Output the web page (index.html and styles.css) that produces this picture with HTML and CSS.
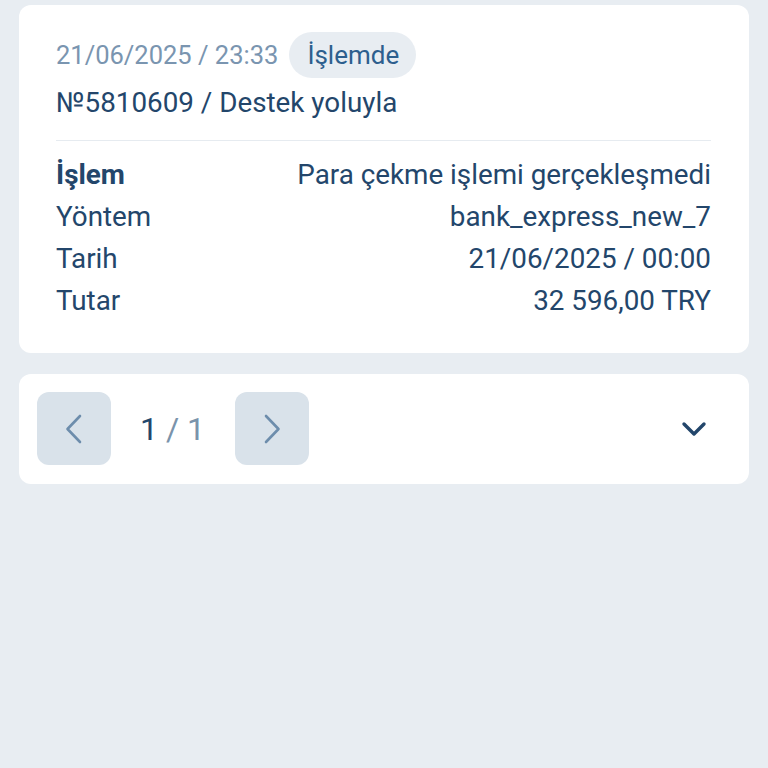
FILE: index.html
```html
<!DOCTYPE html>
<html lang="tr">
<head>
  <meta charset="UTF-8" />
  <meta name="viewport" content="width=device-width, initial-scale=1.0"/>
  <title>İşlem geçmişi</title>
  <link rel="stylesheet" href="styles.css">
</head>
<body>
  <div class="card request">
    <div class="request-head">
      <span class="request-date">21/06/2025 / 23:33</span>
      <span class="badge">İşlemde</span>
    </div>
    <div class="request-title">№5810609 / Destek yoluyla</div>
    <hr class="divider">
    <div class="details">
      <span class="label strong">İşlem</span>
      <span class="value">Para çekme işlemi gerçekleşmedi</span>
      <span class="label">Yöntem</span>
      <span class="value">bank_express_new_7</span>
      <span class="label">Tarih</span>
      <span class="value">21/06/2025 / 00:00</span>
      <span class="label">Tutar</span>
      <span class="value">32 596,00 TRY</span>
    </div>
  </div>

  <div class="card pager">
    <button class="page-btn" aria-label="Önceki">
      <svg width="26" height="32" viewBox="0 0 26 32"><path d="M19 3 L6.5 16 L19 29" fill="none" stroke="currentColor" stroke-width="2.6" stroke-linecap="round" stroke-linejoin="round"/></svg>
    </button>
    <div class="page-count"><span class="current">1</span> / 1</div>
    <button class="page-btn" aria-label="Sonraki">
      <svg width="26" height="32" viewBox="0 0 26 32"><path d="M7 3 L19.5 16 L7 29" fill="none" stroke="currentColor" stroke-width="2.6" stroke-linecap="round" stroke-linejoin="round"/></svg>
    </button>
    <button class="toggle" aria-label="Aç">
      <svg width="26" height="16" viewBox="0 0 26 16"><path d="M3 3 L13 13 L23 3" fill="none" stroke="currentColor" stroke-width="3.4" stroke-linecap="round" stroke-linejoin="round"/></svg>
    </button>
  </div>
</body>
</html>
```

FILE: styles.css
```css
:root {
  --bg: #e8edf2;
  --text: #23466b;
  --muted: #7a95b0;
  --btn: #d9e2ea;
}

* {
  box-sizing: border-box;
}

body {
  margin: 0;
  padding: 5px 19px;
  background: var(--bg);
  color: var(--text);
  font-family: Roboto, "Noto Sans", sans-serif;
  font-size: 27.8px;
}

.card {
  background: #fff;
  border-radius: 12px;
}

.request {
  padding: 27px 38px 31px 37px;
}

.request-head {
  display: flex;
  align-items: center;
  gap: 11px;
}

.request-date {
  color: var(--muted);
  font-size: 25.5px;
}

.badge {
  display: inline-flex;
  align-items: center;
  height: 46px;
  padding: 0 17px 0 18px;
  border-radius: 23px;
  background: var(--bg);
  color: #2d5f8e;
  font-size: 26px;
}

.request-title {
  margin-top: 10px;
  line-height: 30px;
}

.divider {
  margin: 22px 0 13px;
  border: none;
  border-top: 1px solid #e6ebf0;
}

.details {
  display: grid;
  grid-template-columns: auto 1fr;
  line-height: 42px;
}

.label.strong {
  font-weight: 700;
}

.value {
  text-align: right;
}

.pager {
  margin-top: 21px;
  padding: 18px 18px 19px;
  display: flex;
  align-items: center;
}

.page-btn {
  width: 74px;
  height: 73px;
  border: none;
  border-radius: 12px;
  background: var(--btn);
  color: #6d8dac;
  display: flex;
  align-items: center;
  justify-content: center;
  padding: 0;
}

.page-count {
  margin: 0 30px 0 29px;
  font-size: 32px;
  color: #7a93ab;
}

.page-count .current {
  color: var(--text);
}

.toggle {
  margin-left: auto;
  margin-right: 24px;
  border: none;
  background: none;
  padding: 0;
  color: var(--text);
  display: flex;
}
```
